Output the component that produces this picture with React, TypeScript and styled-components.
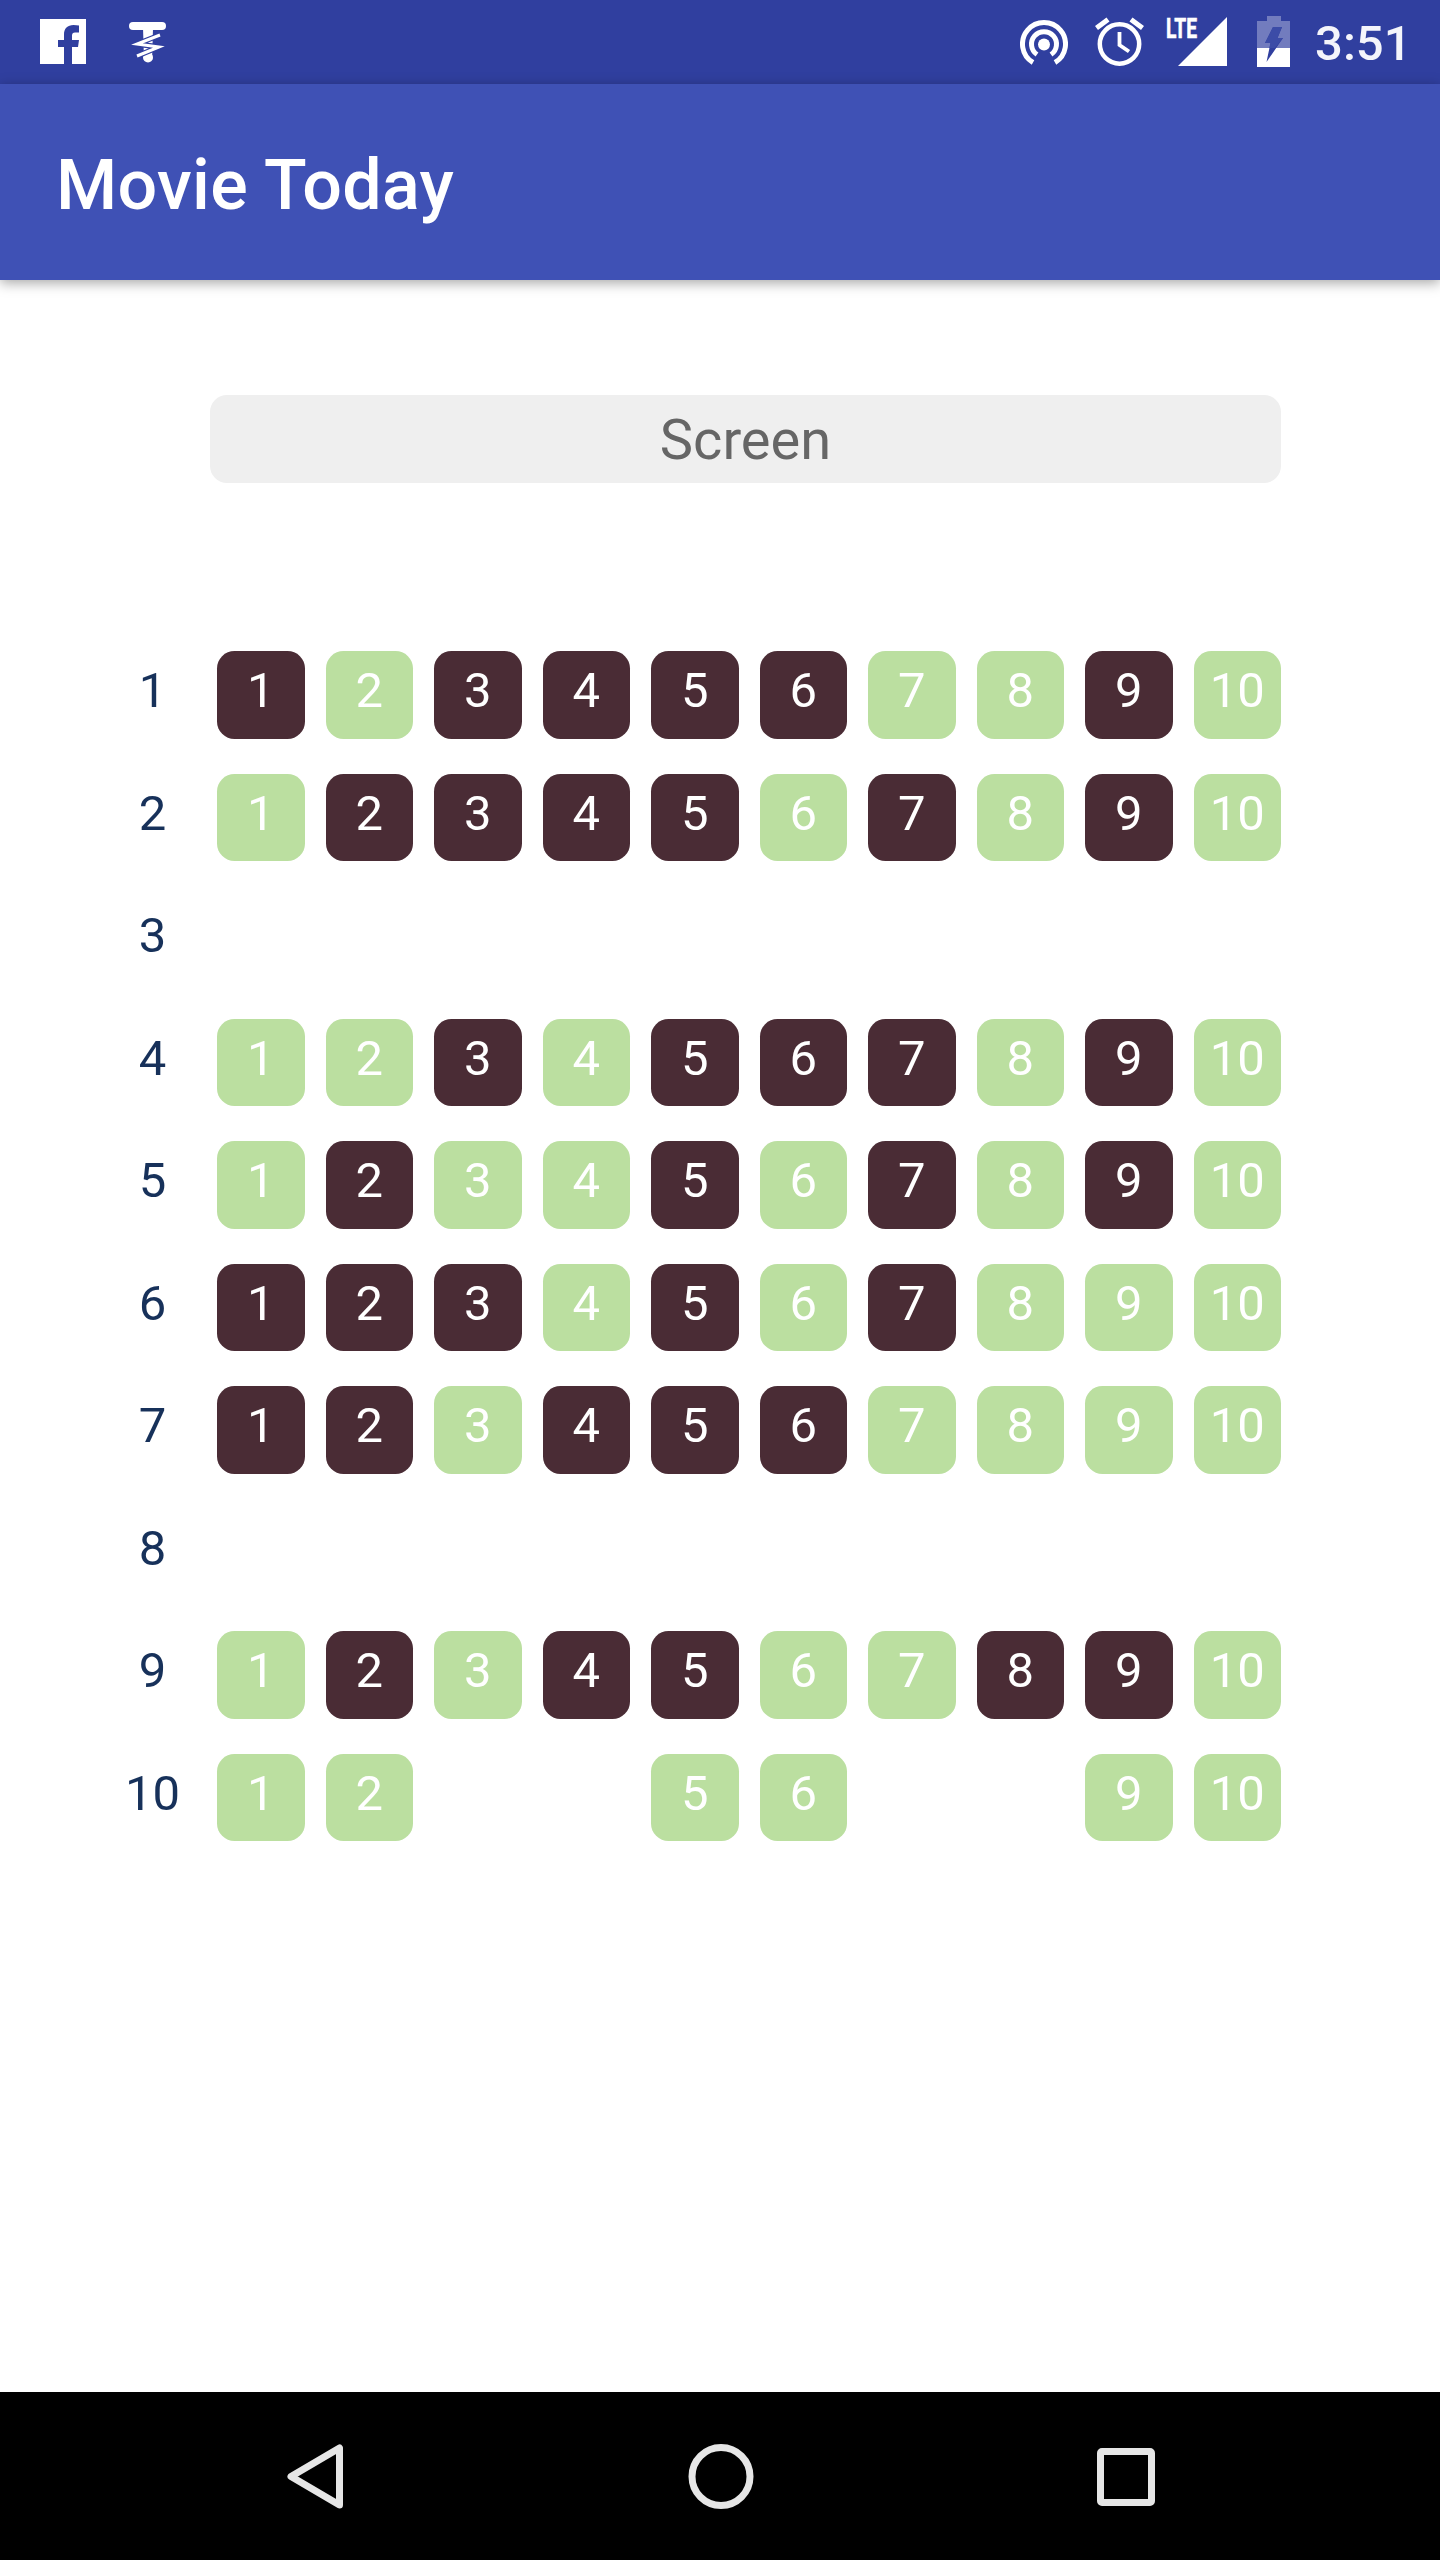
import React from "react";
import styled, { createGlobalStyle } from "styled-components";

const Global = createGlobalStyle`
  html, body { margin: 0; padding: 0; background: #fff; }
  body { font-family: Roboto, "Liberation Sans", sans-serif; }
`;

const Phone = styled.div`
  width: 1440px;
  height: 2560px;
  display: flex;
  flex-direction: column;
  overflow: hidden;
`;

const StatusBar = styled.div`
  height: 84px;
  flex: none;
  background: #303f9f;
  display: flex;
  align-items: flex-start;
  color: #fff;
`;

const StatusIcon = styled.svg<{ $left: number; $top: number }>`
  display: block;
  flex: none;
  margin-left: ${(p) => p.$left}px;
  margin-top: ${(p) => p.$top}px;
`;

const Spacer = styled.div`
  flex: 1;
`;

const Clock = styled.div`
  font-size: 49px;
  font-weight: 500;
  line-height: 50px;
  margin: 19px 28.5px 0 25.5px;
  color: #f4f5fb;
`;

const AppBar = styled.header`
  height: 196px;
  flex: none;
  background: #3f51b5;
  box-shadow: 0 3px 12px rgba(0, 0, 0, 0.35);
  position: relative;
  display: flex;
  align-items: center;
  padding: 6px 0 0 56px;
  box-sizing: border-box;
`;

const Title = styled.h1`
  margin: 0;
  font-size: 70px;
  font-weight: 500;
  letter-spacing: 0.3px;
  color: #fff;
  line-height: 1;
`;

const Main = styled.main`
  flex: 1;
  display: flex;
  flex-direction: column;
  padding-top: 115px;
`;

const ScreenBar = styled.div`
  width: 1071px;
  height: 88px;
  margin-left: 210px;
  border-radius: 17px;
  background: #efefef;
  color: #666;
  font-size: 56px;
  line-height: 90px;
  text-align: center;
`;

const Rows = styled.div`
  margin-top: 168px;
  display: flex;
  flex-direction: column;
`;

const Row = styled.div`
  height: 122.5px;
  display: flex;
  align-items: flex-start;
  padding-left: 122.5px;
`;

const RowLabel = styled.div`
  width: 60px;
  margin-right: 34.5px;
  height: 87.5px;
  line-height: 79px;
  text-align: center;
  font-size: 49px;
  color: #17315a;
`;

const Seats = styled.div`
  display: grid;
  grid-template-columns: repeat(10, 87.5px);
  column-gap: 21px;
`;

const Seat = styled.div<{ $kind: string }>`
  height: 87.5px;
  border-radius: 17.5px;
  background: ${(p) => (p.$kind === "d" ? "#4a2c35" : p.$kind === "g" ? "#bbdfa0" : "transparent")};
  color: #fff;
  font-size: 49px;
  line-height: 79px;
  text-align: center;
`;

const NavBar = styled.nav`
  height: 168px;
  flex: none;
  background: #000;
  display: flex;
  align-items: center;
  position: relative;
`;

const NavIcon = styled.svg<{ $left: number }>`
  display: block;
  flex: none;
  margin-left: ${(p) => p.$left}px;
  margin-top: 1px;
`;

const layout = [
  "dgddddggdg",
  "gddddgdgdg",
  "",
  "ggdgdddgdg",
  "gdggdgdgdg",
  "dddgdgdggg",
  "ddgdddgggg",
  "",
  "gdgddggddg",
  "gg..gg..gg",
];

export default function App() {
  return (
    <Phone>
      <Global />
      <StatusBar>
        <StatusIcon $left={40} $top={19} width={46} height={45} viewBox="0 0 46 45">
          <path
            fillRule="evenodd"
            fill="#fff"
            d="M0 0H46V45H32V28H38L39 21H32V16.500C32 14.500 33 13.500 35 13.500H39V6.500C37.500 6.200 35.500 6 33.500 6C27.500 6 24 9.500 24 15.500V21H18V28H24V45H0Z"
          />
        </StatusIcon>
        <StatusIcon $left={43} $top={22} width={37} height={41} viewBox="0 0 37 41">
          <path d="M4 4H33" stroke="#fff" strokeWidth={8} strokeLinecap="round" fill="none" />
          <path d="M14 6L24 6L23 38H15Z" fill="#fff" />
          <circle cx={19} cy={35.500} r={5} fill="#fff" />
          <path d="M31 13L8 22L30 25L8 34" stroke="#303f9f" strokeWidth={5.500} fill="none" />
          <path d="M31 13L8 22L30 25L8 34" stroke="#fff" strokeWidth={3} fill="none" />
        </StatusIcon>
        <Spacer />
        <StatusIcon $left={0} $top={20} width={48} height={46} viewBox="0 0 48 46" fill="none">
          <circle cx={24} cy={24.500} r={6} fill="#fff" />
          <path d="M13 42.500A21.500 21.500 0 1 1 35 42.500" stroke="#fff" strokeWidth={5} />
          <path d="M17 34.500A12.500 12.500 0 1 1 31 34.500" stroke="#fff" strokeWidth={5} />
        </StatusIcon>
        <StatusIcon $left={27} $top={17} width={49} height={49} viewBox="0 0 49 49" fill="none">
          <circle cx={24.500} cy={27} r={19.700} stroke="#fff" strokeWidth={4.500} />
          <path d="M24.500 15V28L34 34.500" stroke="#fff" strokeWidth={3.800} />
          <path d="M1.500 11L13 2.500M47.500 11L36 2.500" stroke="#fff" strokeWidth={5} />
        </StatusIcon>
        <StatusIcon $left={22} $top={11} width={61} height={55} viewBox="0 -6 61 55">
          <path d="M61 0V49H12Z" fill="#fff" />
          <text
            x={0}
            y={21}
            fill="#fff"
            stroke="#fff"
            strokeWidth={0.6}
            fontFamily="Roboto, sans-serif"
            fontWeight={700}
            fontSize={28}
            textLength={31}
            lengthAdjust="spacingAndGlyphs"
          >
            LTE
          </text>
        </StatusIcon>
        <StatusIcon $left={30} $top={16} width={33} height={51} viewBox="0 0 33 51">
          <path d="M10 0H24V5H33V32H0V5H10Z" fill="#fff" fillOpacity={0.32} />
          <path d="M0 32H33V51H0Z" fill="#fff" />
          <path d="M16 11H25L20.500 22H26L9.500 46L13.500 27H8Z" fill="#303f9f" />
          <path d="M16 11H25L20.500 22H26L18 32H12.400L13.500 27H8Z" fill="#3c4ca7" />
        </StatusIcon>
        <Clock>3:51</Clock>
      </StatusBar>
      <AppBar>
        <Title>Movie Today</Title>
      </AppBar>
      <Main>
        <ScreenBar>Screen</ScreenBar>
        <Rows>
          {layout.map((row, i) => (
            <Row key={i}>
              <RowLabel>{i + 1}</RowLabel>
              <Seats>
                {row.split("").map((kind, j) => (
                  <Seat key={j} $kind={kind}>
                    {kind === "." ? "" : j + 1}
                  </Seat>
                ))}
              </Seats>
            </Row>
          ))}
        </Rows>
      </Main>
      <NavBar>
        <NavIcon $left={287} width={56} height={65} viewBox="0 0 56 65" fill="none">
          <path d="M52.500 4V61L4 32.500Z" stroke="#e6e6e6" strokeWidth={7} strokeLinejoin="round" />
        </NavIcon>
        <NavIcon $left={345} width={66} height={65} viewBox="0 0 66 65" fill="none">
          <circle cx={33} cy={32.500} r={29} stroke="#e6e6e6" strokeWidth={7} />
        </NavIcon>
        <NavIcon $left={343} width={58} height={58} viewBox="0 0 58 58" fill="none">
          <rect x={3.500} y={3.500} width={51} height={51} rx={1.500} stroke="#e6e6e6" strokeWidth={7} />
        </NavIcon>
      </NavBar>
    </Phone>
  );
}
